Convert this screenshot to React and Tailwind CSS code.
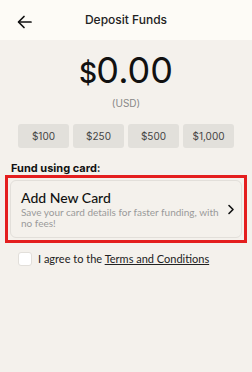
import React from "react";

export default function App() {
  const amounts = ["$100", "$250", "$500", "$1,000"];
  return (
    <div className="w-[252px] h-[372px] bg-[#f4f1ec] flex flex-col" style={{ fontFamily: "Inter, 'Liberation Sans', sans-serif" }}>
      <div className="h-[40px] bg-[#fdfbf6] flex items-center relative shrink-0">
        <svg className="absolute left-[17px] top-[15px]" width="15" height="14" viewBox="0 0 15 14" fill="none" stroke="#111" strokeWidth="1.7" strokeLinecap="round" strokeLinejoin="round">
          <path d="M14 7H2" />
          <path d="M7 1.5L1.5 7L7 12.5" />
        </svg>
        <div className="w-full text-center text-[12px] font-medium text-[#222]">Deposit Funds</div>
      </div>
      <div className="flex flex-col items-center pt-[12px]">
        <div className="flex items-end leading-none text-[#111]">
          <span className="text-[28px] font-medium mb-[1px] tracking-tight">$</span>
          <span className="text-[36px] font-normal">0.00</span>
        </div>
        <div className="text-[10px] text-[#888] mt-[8px]">(USD)</div>
      </div>
      <div className="flex gap-[4px] px-[18px] mt-[13px]">
        {amounts.map((a) => (
          <div key={a} className="w-[51px] h-[24px] rounded-[3px] bg-[#e2e0db] flex items-center justify-center text-[10px] text-[#444]">
            {a}
          </div>
        ))}
      </div>
      <div className="px-[11px] mt-[14px] text-[11px] font-bold text-[#111] leading-[12px]">Fund using card:</div>
      <div className="mx-[5px] mt-[1px] border-[3px] border-[#e41e1e] p-[2px]">
        <div className="rounded-[6px] border border-[#e2dfda] bg-[#f4f1ec] h-[58px] flex items-center pl-[10px] pr-[6px]">
          <div className="flex-1">
            <div className="text-[14px] text-[#111] leading-[15px]" style={{ fontFamily: "Lato, sans-serif", fontWeight: 500 }}>Add New Card</div>
            <div className="text-[10px] text-[#9a9a9a] leading-[11px] mt-[2px]" style={{ fontFamily: "Lato, sans-serif" }}>Save your card details for faster funding, with no fees!</div>
          </div>
          <svg width="8" height="11" viewBox="0 0 8 11" fill="none" stroke="#111" strokeWidth="1.6" strokeLinecap="round" strokeLinejoin="round" className="ml-[2px]">
            <path d="M2 1.5L6 5.5L2 9.5" />
          </svg>
        </div>
      </div>
      <div className="flex items-center px-[18px] mt-[8px]">
        <div className="w-[14px] h-[14px] rounded-[3px] bg-white border border-[#e2dfda]"></div>
        <div className="ml-[6px] text-[11px] text-[#222]" style={{ fontFamily: "Lato, sans-serif" }}>
          I agree to the <span className="underline">Terms and Conditions</span>
        </div>
      </div>
    </div>
  );
}
